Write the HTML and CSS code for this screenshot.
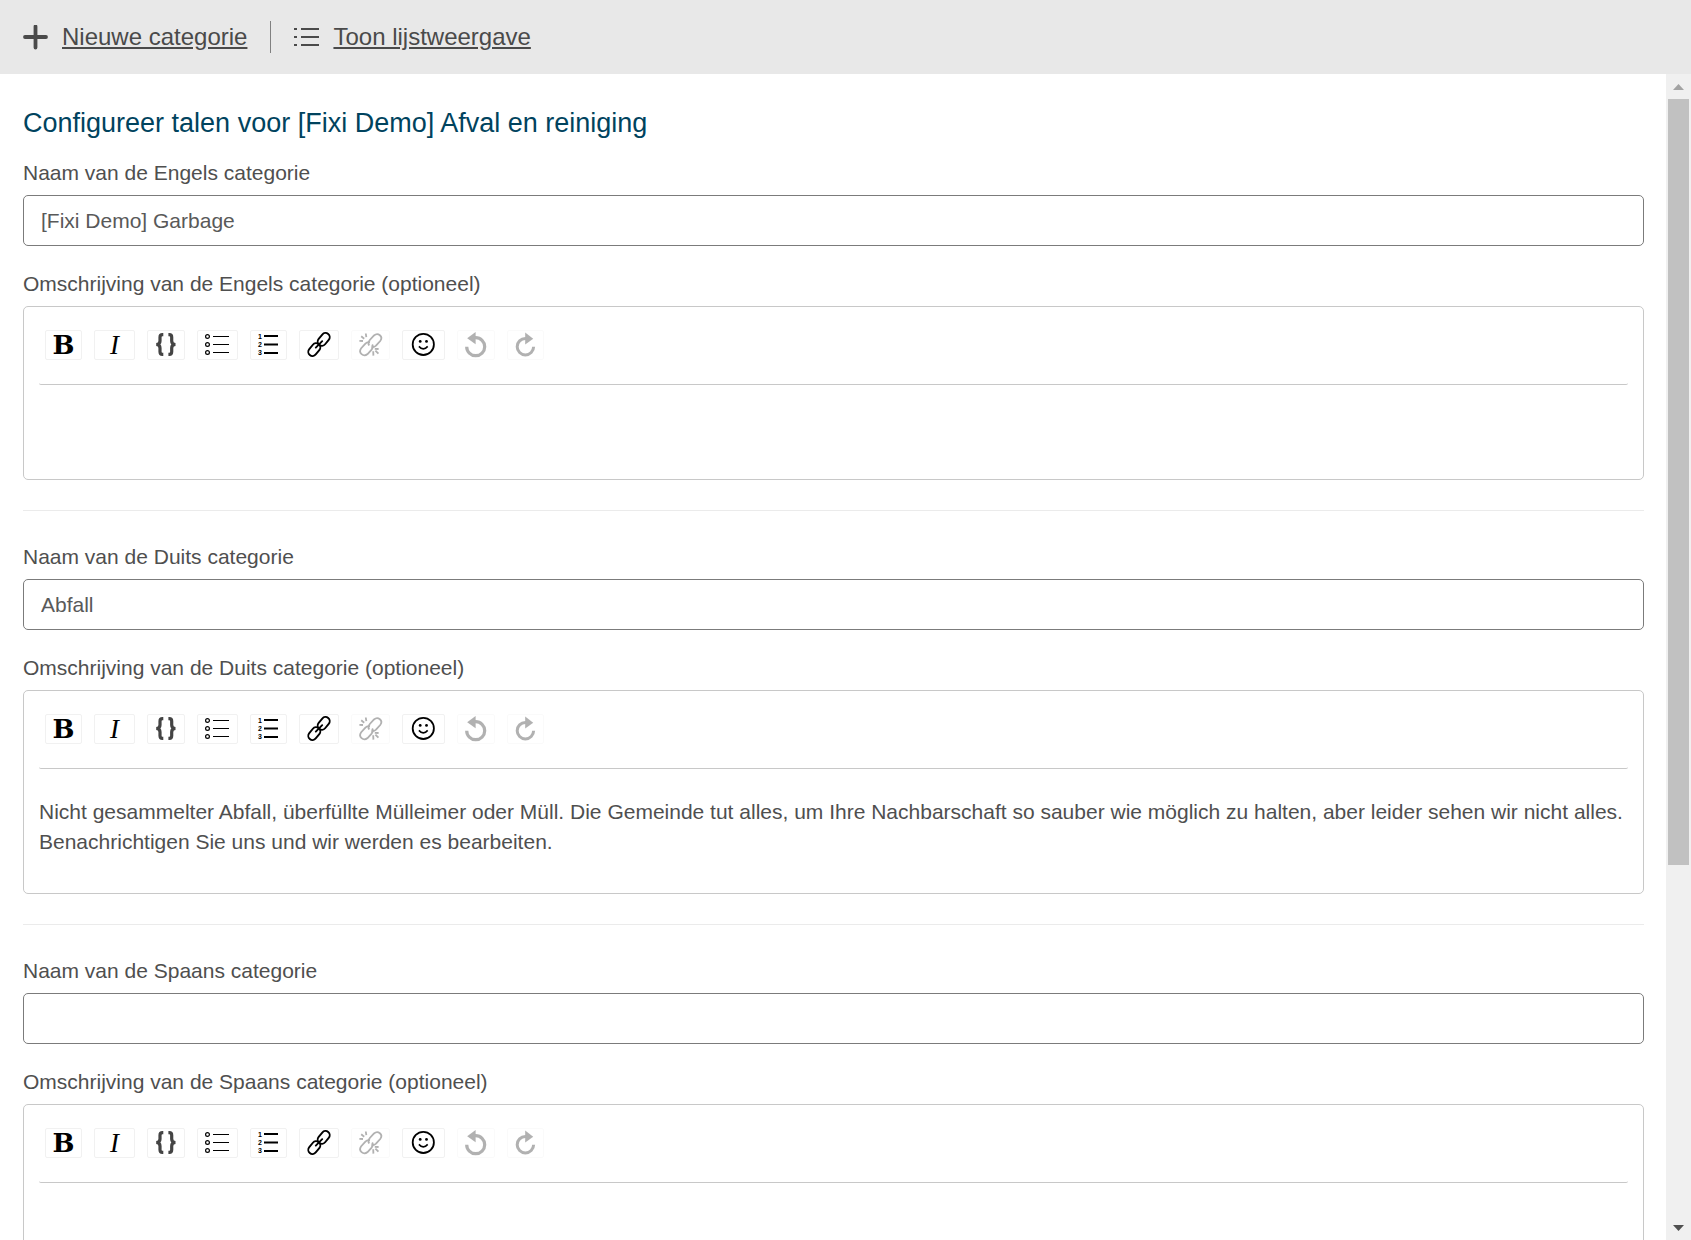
FILE: index.html
```html
<!DOCTYPE html>
<html lang="nl">
<head>
<meta charset="utf-8">
<meta name="viewport" content="width=device-width, initial-scale=1">
<title>Configureer talen</title>
<link rel="stylesheet" href="styles.css">
</head>
<body>
<svg class="sprite" aria-hidden="true">
  <symbol id="i-code" viewBox="0 0 26 28"><g fill="none" stroke="#444" stroke-width="3.2"><path d="M10.3 3.6H9.4Q7 3.6 7 6.2V10Q7 13.5 3.2 13.5Q7 13.5 7 17V20.8Q7 23.4 9.4 23.4H10.3"/><path d="M15.4 3.6H16.3Q18.7 3.6 18.7 6.2V10Q18.7 13.5 22.5 13.5Q18.7 13.5 18.7 17V20.8Q18.7 23.4 16.3 23.4H15.4"/></g></symbol>
  <symbol id="i-ul" viewBox="0 0 29 28"><g fill="none" stroke="#000" stroke-width="1.2"><circle cx="4.5" cy="5.5" r="1.9"/><circle cx="4.5" cy="13.5" r="1.9"/><circle cx="4.5" cy="21.5" r="1.9"/><path d="M10 5.5H26M10 13.5H26M10 21.5H26"/></g></symbol>
  <symbol id="i-link" viewBox="0 0 28 28"><g fill="none" stroke="#000" stroke-width="1.9"><rect x="-7" y="-4.2" width="14" height="8.4" rx="4.2" transform="translate(9.3 18.6) rotate(-50)"/><rect x="-7" y="-4.2" width="14" height="8.4" rx="4.2" transform="translate(18.7 8.4) rotate(-50)"/><path d="M10.8 16.6L17.2 10.2" stroke-linecap="round"/></g></symbol>
  <symbol id="i-unlink" viewBox="0 0 27 28"><g fill="none" stroke="#000" stroke-width="1.8"><path d="M12.2 14.6C10.8 12.4 11.4 10.6 12.8 9L17 4.5C21 .9 26.6 5.6 23.2 10L19 14.6C17.6 15.9 16 16.4 14.4 15.7"/><path d="M13 11.3C11.2 10.9 9.6 11.4 8.4 12.6L4.2 17.2C.9 21.8 6.4 26.6 10.6 23L14.6 18.6C15.9 17 16.2 15.2 15.2 13.6"/><path d="M4.2 5.3L7.2 7.7M8.8 2.5L9.3 6.2M2.4 9.8L6 10M17.8 17.8L21.6 18M16.2 20.2L16.4 24.6M18.4 19.6L21.4 22.6"/></g></symbol>
  <symbol id="i-smile" viewBox="0 0 31 28"><circle cx="15.3" cy="13.4" r="10.6" fill="none" stroke="#000" stroke-width="1.8"/><circle cx="12.2" cy="10.4" r="1.4"/><circle cx="18.5" cy="10.4" r="1.4"/><path d="M10.9 15.4Q15.3 20.4 19.7 15.4" fill="none" stroke="#000" stroke-width="1.6"/></symbol>
  <symbol id="i-undo" viewBox="0 0 26 28"><path d="M3.7 15.7A9 9 0 1 0 12.7 6.7H11.5" fill="none" stroke="#000" stroke-width="3.2"/><path d="M4.2 7.3L12.6 1.1V13.2Z"/></symbol>
  <symbol id="i-redo" viewBox="0 0 25 28"><path d="M20.6 15.7A8.2 8.2 0 1 1 12.4 7.5H13.5" fill="none" stroke="#000" stroke-width="3"/><path d="M20.2 7.7L12.2 1.6V13.6Z"/></symbol>
</svg>

<header class="topbar">
  <a class="action" href="#nieuw">
    <svg width="25" height="25" viewBox="0 0 25 25" aria-hidden="true"><path d="M2 12H23M12.5 1.5V22.5" stroke="#4a4a4a" stroke-width="3.8" stroke-linecap="round"/></svg>
    <span>Nieuwe categorie</span>
  </a>
  <span class="divider"></span>
  <a class="action" href="#lijst">
    <svg width="25" height="25" viewBox="0 0 25 25" aria-hidden="true"><path d="M0 4H3M0 12H3M0 20H3M7 4H25M7 12H25M7 20H25" stroke="#4a4a4a" stroke-width="1.8"/></svg>
    <span>Toon lijstweergave</span>
  </a>
</header>

<div class="viewport">
  <main class="content">
    <h1>Configureer talen voor [Fixi Demo] Afval en reiniging</h1>

    <section class="language">
      <label for="name-en">Naam van de Engels categorie</label>
      <input id="name-en" type="text" value="[Fixi Demo] Garbage">
      <label id="desc-en">Omschrijving van de Engels categorie (optioneel)</label>
      <div class="editor">
        <div class="toolbar" role="toolbar">
          <button type="button" aria-label="Vet"><span class="glyph bold">B</span></button>
          <button type="button" aria-label="Cursief"><span class="glyph italic">I</span></button>
          <button type="button" aria-label="Code"><svg width="26" height="28"><use href="#i-code"/></svg></button>
          <button type="button" aria-label="Opsomming"><svg width="29" height="28"><use href="#i-ul"/></svg></button>
          <button type="button" aria-label="Genummerde lijst"><svg class="numbered" width="25" height="28"><path d="M8 5H22M8 13.5H22M8 22H22"/><text x="4" y="8">1</text><text x="4" y="16">2</text><text x="4" y="24">3</text></svg></button>
          <button type="button" aria-label="Link"><svg width="28" height="28"><use href="#i-link"/></svg></button>
          <button type="button" aria-label="Link verwijderen" disabled><svg width="27" height="28"><use href="#i-unlink"/></svg></button>
          <button type="button" aria-label="Emoji"><svg width="31" height="28"><use href="#i-smile"/></svg></button>
          <button type="button" aria-label="Ongedaan maken" disabled><svg width="26" height="28"><use href="#i-undo"/></svg></button>
          <button type="button" aria-label="Opnieuw" disabled><svg width="25" height="28"><use href="#i-redo"/></svg></button>
        </div>
        <div class="text" contenteditable="true" spellcheck="false" role="textbox" aria-labelledby="desc-en"></div>
      </div>
    </section>

    <section class="language">
      <label for="name-de">Naam van de Duits categorie</label>
      <input id="name-de" type="text" value="Abfall">
      <label id="desc-de">Omschrijving van de Duits categorie (optioneel)</label>
      <div class="editor">
        <div class="toolbar" role="toolbar">
          <button type="button" aria-label="Vet"><span class="glyph bold">B</span></button>
          <button type="button" aria-label="Cursief"><span class="glyph italic">I</span></button>
          <button type="button" aria-label="Code"><svg width="26" height="28"><use href="#i-code"/></svg></button>
          <button type="button" aria-label="Opsomming"><svg width="29" height="28"><use href="#i-ul"/></svg></button>
          <button type="button" aria-label="Genummerde lijst"><svg class="numbered" width="25" height="28"><path d="M8 5H22M8 13.5H22M8 22H22"/><text x="4" y="8">1</text><text x="4" y="16">2</text><text x="4" y="24">3</text></svg></button>
          <button type="button" aria-label="Link"><svg width="28" height="28"><use href="#i-link"/></svg></button>
          <button type="button" aria-label="Link verwijderen" disabled><svg width="27" height="28"><use href="#i-unlink"/></svg></button>
          <button type="button" aria-label="Emoji"><svg width="31" height="28"><use href="#i-smile"/></svg></button>
          <button type="button" aria-label="Ongedaan maken" disabled><svg width="26" height="28"><use href="#i-undo"/></svg></button>
          <button type="button" aria-label="Opnieuw" disabled><svg width="25" height="28"><use href="#i-redo"/></svg></button>
        </div>
        <div class="text" contenteditable="true" spellcheck="false" role="textbox" aria-labelledby="desc-de">Nicht gesammelter Abfall, überfüllte Mülleimer oder Müll. Die Gemeinde tut alles, um Ihre Nachbarschaft so sauber wie möglich zu halten, aber leider sehen wir nicht alles. Benachrichtigen Sie uns und wir werden es bearbeiten.</div>
      </div>
    </section>

    <section class="language">
      <label for="name-es">Naam van de Spaans categorie</label>
      <input id="name-es" type="text" value="">
      <label id="desc-es">Omschrijving van de Spaans categorie (optioneel)</label>
      <div class="editor">
        <div class="toolbar" role="toolbar">
          <button type="button" aria-label="Vet"><span class="glyph bold">B</span></button>
          <button type="button" aria-label="Cursief"><span class="glyph italic">I</span></button>
          <button type="button" aria-label="Code"><svg width="26" height="28"><use href="#i-code"/></svg></button>
          <button type="button" aria-label="Opsomming"><svg width="29" height="28"><use href="#i-ul"/></svg></button>
          <button type="button" aria-label="Genummerde lijst"><svg class="numbered" width="25" height="28"><path d="M8 5H22M8 13.5H22M8 22H22"/><text x="4" y="8">1</text><text x="4" y="16">2</text><text x="4" y="24">3</text></svg></button>
          <button type="button" aria-label="Link"><svg width="28" height="28"><use href="#i-link"/></svg></button>
          <button type="button" aria-label="Link verwijderen" disabled><svg width="27" height="28"><use href="#i-unlink"/></svg></button>
          <button type="button" aria-label="Emoji"><svg width="31" height="28"><use href="#i-smile"/></svg></button>
          <button type="button" aria-label="Ongedaan maken" disabled><svg width="26" height="28"><use href="#i-undo"/></svg></button>
          <button type="button" aria-label="Opnieuw" disabled><svg width="25" height="28"><use href="#i-redo"/></svg></button>
        </div>
        <div class="text" contenteditable="true" spellcheck="false" role="textbox" aria-labelledby="desc-es"></div>
      </div>
    </section>
  </main>

  <div class="scrollbar" aria-hidden="true">
    <svg width="25" height="25"><path d="M7 16L12.5 10L18 16Z" fill="#a3a3a3"/></svg>
    <div class="track"><div class="thumb"></div></div>
    <svg width="25" height="25"><path d="M7 10L12.5 16L18 10Z" fill="#505050"/></svg>
  </div>
</div>
</body>
</html>
```
FILE: styles.css
```css
* {
  box-sizing: border-box;
}

body {
  margin: 0;
  height: 100vh;
  display: flex;
  flex-direction: column;
  overflow: hidden;
  background: #fff;
  color: #4f4f4f;
  font: 21px/30px "Liberation Sans", Arial, sans-serif;
}

.sprite {
  position: absolute;
  width: 0;
  height: 0;
}

/* Top bar */
.topbar {
  flex: none;
  display: flex;
  align-items: center;
  gap: 23px;
  height: 74px;
  padding: 0 23px;
  background: #e8e8e8;
}

.action {
  display: flex;
  align-items: center;
  gap: 14px;
  color: #4a4a4a;
  font-size: 24px;
  text-decoration: none;
}

.action span {
  text-decoration: underline;
}

.divider {
  width: 1px;
  height: 32px;
  background: #808080;
}

/* Scrolling area */
.viewport {
  flex: 1;
  min-height: 0;
  display: flex;
}

.content {
  flex: 1;
  min-width: 0;
  overflow: hidden;
  padding: 30px 22px 0 23px;
}

h1 {
  margin: 0 0 16px;
  color: #00435e;
  font-size: 27px;
  font-weight: normal;
  line-height: 38px;
}

.language + .language {
  margin-top: 30px;
  padding-top: 31px;
  border-top: 1px solid #ebebeb;
}

label {
  display: block;
  margin-bottom: 7px;
}

input {
  display: block;
  width: 100%;
  height: 51px;
  margin-bottom: 23px;
  padding: 0 17px;
  border: 1px solid #7b7b7b;
  border-radius: 5px;
  background: #fff;
  color: #595959;
  font: inherit;
}

.editor {
  padding: 0 15px;
  border: 1px solid #c8c8c8;
  border-radius: 5px;
}

.toolbar {
  display: flex;
  flex-wrap: wrap;
  gap: 12px;
  padding: 23px 6px 24px;
  border-bottom: 1px solid #c8c8c8;
  border-radius: 2px;
}

.toolbar button {
  height: 30px;
  padding: 0 5px;
  border: 1px solid #f1f1f1;
  border-radius: 2px;
  background: #fff;
  color: #000;
}

.toolbar button:disabled {
  opacity: 0.3;
}

.toolbar svg {
  display: block;
}

.glyph {
  display: flex;
  justify-content: center;
  height: 28px;
}

.bold {
  width: 25px;
  font: bold 26px/28px "DejaVu Serif", serif;
}

.italic {
  width: 29px;
  font: italic 27px/28px "Liberation Serif", serif;
}

.numbered {
  stroke-width: 2px;
}

.numbered path {
  stroke: #000;
}

.numbered text {
  font: bold 7px "Liberation Sans", sans-serif;
  text-anchor: middle;
}

.text {
  min-height: 94px;
  padding: 28px 0 36px;
}

/* Scrollbar */
.scrollbar {
  flex: none;
  display: flex;
  flex-direction: column;
  width: 25px;
  background: #f0f0f0;
}

.scrollbar svg {
  flex: none;
  display: block;
}

.track {
  flex: 1;
  padding: 0 2px;
}

.thumb {
  height: 68.6%;
  background: #c1c1c1;
}
```
